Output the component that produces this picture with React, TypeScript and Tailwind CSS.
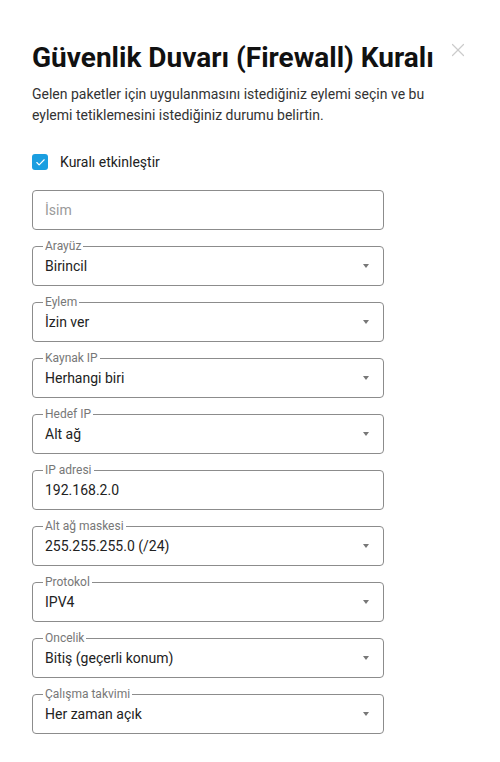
import { X, Check } from "lucide-react"

const fields = [
  { label: "Arayüz", value: "Birincil", select: true },
  { label: "Eylem", value: "İzin ver", select: true },
  { label: "Kaynak IP", value: "Herhangi biri", select: true },
  { label: "Hedef IP", value: "Alt ağ", select: true },
  { label: "IP adresi", value: "192.168.2.0", select: false },
  { label: "Alt ağ maskesi", value: "255.255.255.0 (/24)", select: true },
  { label: "Protokol", value: "IPV4", select: true },
  { label: "Oncelik", value: "Bitiş (geçerli konum)", select: true },
  { label: "Çalışma takvimi", value: "Her zaman açık", select: true },
]

const Field = ({ label, value, select }) => {
  return (
    <div className="relative flex h-10 w-[352px] items-center rounded border border-[#8c8c8c] pl-3 pr-3">
      <span className="absolute -top-[8px] left-[10px] bg-white px-[2px] text-[12px] leading-[14px] text-[#777]">
        {label}
      </span>
      <span className="flex-1 text-[14px] text-[#222]">{value}</span>
      {select && (
        <svg width="6" height="4" viewBox="0 0 6 4" className="mr-[2px]">
          <path d="M0 0h6L3 4z" fill="#777" />
        </svg>
      )}
    </div>
  )
}

const App = () => {
  return (
    <div className="min-h-[762px] bg-white font-['Roboto',sans-serif]">
      <div className="relative px-8 pt-[38px]">
        <button className="absolute right-[31px] top-[39px] text-[#cbcbcb]">
          <X size={22} strokeWidth={1.3} />
        </button>

        <h1 className="text-[28px] font-bold leading-[40px] text-[#111]">
          Güvenlik Duvarı (Firewall) Kuralı
        </h1>

        <p className="mt-[6px] w-[400px] text-[14px] leading-[21px] text-[#333]">
          Gelen paketler için uygulanmasını istediğiniz eylemi seçin ve bu eylemi
          tetiklemesini istediğiniz durumu belirtin.
        </p>

        <label className="mt-[26px] flex h-5 items-center gap-3">
          <span className="flex h-4 w-4 items-center justify-center rounded-[3px] bg-[#1a9ee0]">
            <Check size={11} strokeWidth={2.5} className="text-white" />
          </span>
          <span className="text-[14px] text-[#222]">Kuralı etkinleştir</span>
        </label>

        <div className="mt-[18px] flex flex-col gap-4">
          <div className="flex h-10 w-[352px] items-center rounded border border-[#8c8c8c] px-3">
            <span className="text-[14px] text-[#9a9a9a]">İsim</span>
          </div>
          {fields.map((f) => (
            <Field key={f.label} {...f} />
          ))}
        </div>
      </div>
    </div>
  )
}

export default App
